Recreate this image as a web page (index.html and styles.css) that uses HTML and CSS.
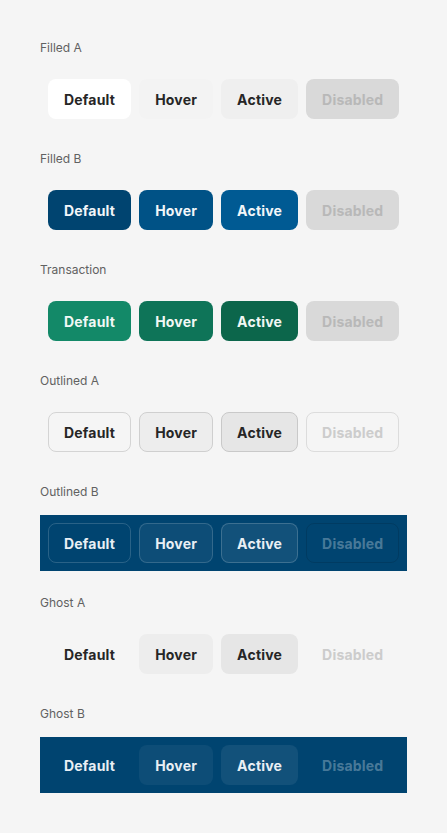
FILE: index.html
```html
<!DOCTYPE html>
<html lang="en">
<head>
    <meta charset="UTF-8">
    <meta name="viewport" content="width=device-width, initial-scale=1.0">
    <title>Buttons</title>
    <link rel="stylesheet" href="styles.css">
</head>
<body>
    <div class="page">
        <!-- Filled A -->
        <div class="section">
            <div class="section-title">Filled A</div>
            <div class="row">
                <button class="btn filled-a">Default</button>
                <button class="btn filled-a hover">Hover</button>
                <button class="btn filled-a active">Active</button>
                <button class="btn filled-a disabled">Disabled</button>
            </div>
        </div>
        <!-- Filled B -->
        <div class="section">
            <div class="section-title">Filled B</div>
            <div class="row">
                <button class="btn filled-b">Default</button>
                <button class="btn filled-b hover">Hover</button>
                <button class="btn filled-b active">Active</button>
                <button class="btn filled-b disabled">Disabled</button>
            </div>
        </div>
        <!-- Transaction -->
        <div class="section">
            <div class="section-title">Transaction</div>
            <div class="row">
                <button class="btn transaction">Default</button>
                <button class="btn transaction hover">Hover</button>
                <button class="btn transaction active">Active</button>
                <button class="btn transaction disabled">Disabled</button>
            </div>
        </div>
        <!-- Outlined A -->
        <div class="section">
            <div class="section-title">Outlined A</div>
            <div class="row">
                <button class="btn outlined-a">Default</button>
                <button class="btn outlined-a hover">Hover</button>
                <button class="btn outlined-a active">Active</button>
                <button class="btn outlined-a disabled">Disabled</button>
            </div>
        </div>
        <!-- Outlined B -->
        <div class="section">
            <div class="section-title">Outlined B</div>
            <div class="row dark">
                <button class="btn outlined-b">Default</button>
                <button class="btn outlined-b hover">Hover</button>
                <button class="btn outlined-b active">Active</button>
                <button class="btn outlined-b disabled">Disabled</button>
            </div>
        </div>
        <!-- Ghost A -->
        <div class="section">
            <div class="section-title">Ghost A</div>
            <div class="row">
                <button class="btn ghost-a">Default</button>
                <button class="btn ghost-a hover">Hover</button>
                <button class="btn ghost-a active">Active</button>
                <button class="btn ghost-a disabled">Disabled</button>
            </div>
        </div>
        <!-- Ghost B -->
        <div class="section">
            <div class="section-title">Ghost B</div>
            <div class="row dark">
                <button class="btn ghost-b">Default</button>
                <button class="btn ghost-b hover">Hover</button>
                <button class="btn ghost-b active">Active</button>
                <button class="btn ghost-b disabled">Disabled</button>
            </div>
        </div>
    </div>
</body>
</html>
```

FILE: styles.css
```css
body {
    margin: 0;
    padding: 0;
    font-family: 'Inter', 'Liberation Sans', sans-serif;
    background: #F5F5F5;
    color: #262626;
}
.page {
    padding: 40px;
    display: flex;
    flex-direction: column;
    gap: 24px;
}
.section {
    display: flex;
    flex-direction: column;
    gap: 15px;
}
.section-title {
    font-size: 12px;
    line-height: 16px;
    color: #616161;
}
.row {
    display: flex;
    gap: 8px;
    padding: 8px;
}
.row.dark {
    background: #004470;
}
.btn {
    font-family: inherit;
    font-size: 14px;
    font-weight: 700;
    letter-spacing: 0.2px;
    height: 40px;
    padding: 0 15px;
    border: 1px solid transparent;
    border-radius: 8px;
    background: transparent;
    color: #262626;
    cursor: pointer;
}

/* Filled A */
.filled-a {
    background: #FFFFFF;
}
.filled-a.hover {
    background: #F3F3F3;
}
.filled-a.active {
    background: #EFEFEF;
}

/* Filled B */
.filled-b {
    background: #004470;
    color: #F2F6F9;
}
.filled-b.hover {
    background: #005286;
}
.filled-b.active {
    background: #005A93;
}

/* Transaction */
.transaction {
    background: #138968;
    color: #F2F8F5;
}
.transaction.hover {
    background: #0E7458;
}
.transaction.active {
    background: #0C664B;
}

/* Disabled (filled) */
.filled-a.disabled,
.filled-b.disabled,
.transaction.disabled {
    background: #D9D9D9;
    color: #B8B8B8;
}

/* Outlined A */
.outlined-a {
    border-color: #D4D4D4;
}
.outlined-a.hover {
    background: #EDEDED;
    border-color: #CFCFCF;
}
.outlined-a.active {
    background: #E6E6E6;
    border-color: #C9C9C9;
}
.outlined-a.disabled {
    border-color: #DCDCDC;
    color: #CCCCCC;
}

/* Outlined B */
.outlined-b {
    color: #E9EFF4;
    border-color: rgba(255, 255, 255, 0.16);
}
.outlined-b.hover {
    background: rgba(255, 255, 255, 0.05);
}
.outlined-b.active {
    background: rgba(255, 255, 255, 0.07);
    border-color: rgba(255, 255, 255, 0.18);
}
.outlined-b.disabled {
    color: rgba(255, 255, 255, 0.3);
    border-color: rgba(0, 0, 0, 0.12);
}

/* Ghost A */
.ghost-a.hover {
    background: #EDEDED;
}
.ghost-a.active {
    background: #E6E6E6;
}
.ghost-a.disabled {
    color: #CCCCCC;
}

/* Ghost B */
.ghost-b {
    color: #E9EFF4;
}
.ghost-b.hover {
    background: rgba(255, 255, 255, 0.05);
}
.ghost-b.active {
    background: rgba(255, 255, 255, 0.07);
}
.ghost-b.disabled {
    color: rgba(255, 255, 255, 0.3);
}
```
